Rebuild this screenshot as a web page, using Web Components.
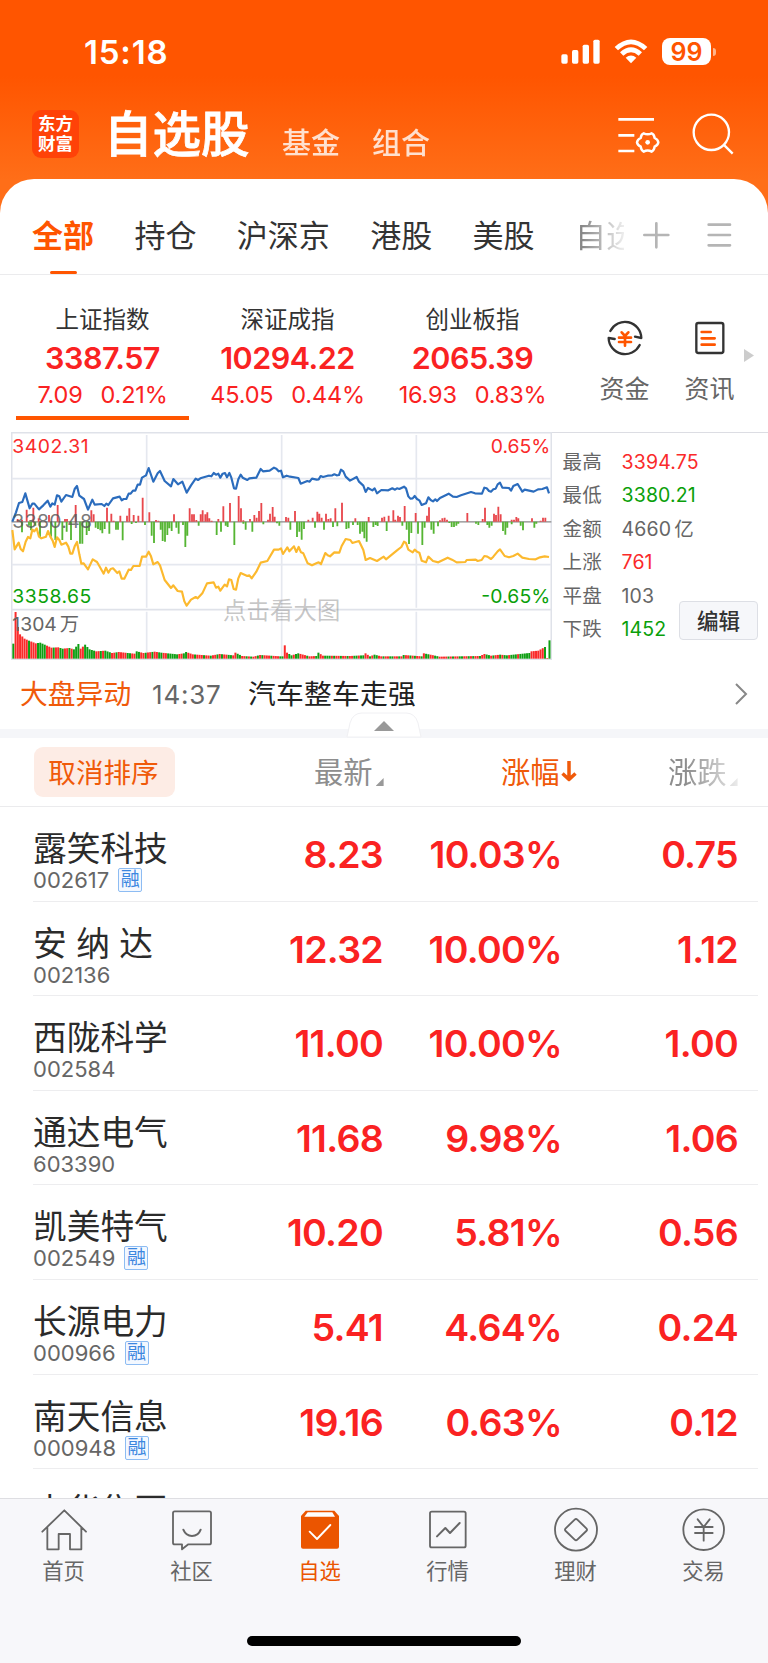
<!DOCTYPE html>
<html lang="zh-CN">
  <head>
    <meta charset="UTF-8" />
    <meta name="viewport" content="width=device-width, initial-scale=1.0" />
    <title>自选股</title>
    <style>
      body {
        margin: 0;
        background: #fff;
        color: #333;
        font-family: Inter, 'Noto Sans CJK SC', sans-serif;
      }
    </style>
  </head>
  <body>
    <stock-app></stock-app>

    <template name="stock-app">
      <style>
        :host {
          display: flex;
          flex-direction: column;
          width: 768px;
          height: 1663px;
          overflow: hidden;
          background: linear-gradient(#ff5500 76px, #ff6e18 180px);
        }
        main {
          flex: 1;
          min-height: 0;
          overflow: hidden;
          background: #fff;
          border-radius: 34px 34px 0 0;
        }
      </style>
      <status-bar></status-bar>
      <app-header></app-header>
      <main>
        <group-tabs></group-tabs>
        <index-strip></index-strip>
        <market-panel></market-panel>
        <news-ticker time="14:37">汽车整车走强</news-ticker>
        <stock-table></stock-table>
      </main>
      <bottom-nav></bottom-nav>
    </template>

    <template name="status-bar">
      <style>
        :host {
          display: flex;
          align-items: center;
          box-sizing: border-box;
          height: 80px;
          padding: 23px 52px 0 84px;
          color: #fff;
        }
        .time {
          flex: 1;
          font-size: 33px;
          font-weight: 600;
          line-height: 40px;
          letter-spacing: 0.8px;
        }
        .battery {
          width: 49px;
          height: 27px;
          line-height: 28px;
          border-radius: 8px;
          background: #fff;
          color: #ff5500;
          font-size: 25px;
          font-weight: 600;
          text-align: center;
        }
        .nub {
          width: 3px;
          height: 8px;
          margin-left: 2px;
          border-radius: 0 3px 3px 0;
          background: #ffb48a;
        }
        svg {
          display: block;
        }
      </style>
      <span class="time">15:18</span>
      <svg width="39" height="25" viewBox="0 0 117 75" fill="#fff">
        <rect x="1" y="46" width="19" height="28" rx="5" />
        <rect x="33" y="33" width="19" height="41" rx="5" />
        <rect x="65" y="17" width="19" height="57" rx="5" />
        <rect x="97" y="2" width="19" height="72" rx="5" />
      </svg>
      <svg width="34" height="25" viewBox="0 0 102 75" fill="#fff" style="margin: 0 14px 0 14px">
        <path d="M2 24Q51 -21 100 24L90 34Q51 -3 12 34Z" />
        <path d="M18 40Q51 10 84 40L74 50Q51 30 28 50Z" />
        <path d="M35 56Q51 43 67 56L51 73Z" />
      </svg>
      <span class="battery">99</span>
      <span class="nub"></span>
    </template>

    <template name="app-header">
      <style>
        :host {
          display: flex;
          height: 99px;
          padding: 0 34px 0 32px;
          box-sizing: border-box;
          color: #fff;
        }
        .logo {
          display: flex;
          flex-direction: column;
          justify-content: center;
          align-items: center;
          width: 47px;
          height: 48px;
          margin-top: 30px;
          border-radius: 9px;
          background: #ff4208;
          font-size: 17.5px;
          font-weight: 700;
          line-height: 20px;
        }
        h1 {
          width: 147px;
          margin: 28px 0 0 25px;
          font-size: 48.5px;
          font-weight: 500;
          line-height: 53px;
          white-space: nowrap;
          -webkit-text-stroke: 0.8px #fff;
        }
        .link {
          margin: 44px 0 0 32px;
          width: 58px;
          font-size: 29px;
          font-weight: 500;
          line-height: 40px;
          opacity: 0.8;
        }
        h1 + .link {
          margin-left: 31px;
        }
        .icons {
          flex: 1;
          display: flex;
          justify-content: flex-end;
          gap: 32px;
          padding-top: 32px;
        }
        svg {
          fill: none;
          stroke: #fff;
        }
      </style>
      <div class="logo"><span>东方</span><span>财富</span></div>
      <h1>自选股</h1>
      <span class="link">基金</span>
      <span class="link">组合</span>
      <div class="icons">
        <svg width="42" height="42" viewBox="0 0 126 126" stroke-width="8">
          <path d="M1 22H108M1 70H49M1 117H49" />
          <path
            d="M77 64Q89 70 101 64Q108 66 110 78Q120 83 121 91Q120 99 110 104Q108 116 101 119Q89 112 77 119Q70 116 68 104Q58 99 57 91Q58 83 68 78Q70 66 77 64Z"
            stroke-width="7.5"
          />
          <circle cx="89" cy="91" r="7" fill="#fff" stroke="none" />
        </svg>
        <svg width="42" height="44" viewBox="0 0 126 132" stroke-width="7">
          <circle cx="58" cy="61" r="53" />
          <path d="M95 98L122 125" />
        </svg>
      </div>
    </template>

    <template name="group-tabs">
      <style>
        :host {
          display: flex;
          height: 96px;
          border-bottom: 1.5px solid #ebebed;
          box-sizing: border-box;
          padding-left: 32px;
          font-size: 31px;
          line-height: 114px;
        }
        span {
          margin-right: 40.4px;
          white-space: nowrap;
        }
        .active {
          display: flex;
          flex-direction: column;
          align-items: center;
          color: #ff5500;
          font-weight: 700;
        }
        .active::after {
          content: '';
          width: 27px;
          height: 4px;
          margin-top: -22px;
          border-radius: 2px;
          background: #ff5500;
        }
        .cut {
          width: 49px;
          margin-right: 19px;
          overflow: hidden;
          color: transparent;
          background: linear-gradient(90deg, #777, #eee) text;
        }
        svg {
          margin-top: 43px;
          fill: none;
          stroke: #b5b5b5;
          stroke-linecap: round;
        }
      </style>
      <span class="active">全部</span>
      <span>持仓</span>
      <span>沪深京</span>
      <span>港股</span>
      <span>美股</span>
      <span class="cut">自选</span>
      <svg width="90" height="28" viewBox="0 0 270 84" stroke-width="8">
        <path d="M4 39H76M40 4V76M197 8H261M197 39H261M197 70H261" />
      </svg>
    </template>

    <template name="index-strip">
      <style>
        :host {
          display: flex;
          height: 157px;
          padding-left: 10px;
        }
        .tool {
          display: flex;
          flex-direction: column;
          align-items: center;
          width: 85px;
          padding-top: 45px;
          color: #666;
          font-size: 25px;
          line-height: 30px;
        }
        .tool svg {
          margin-bottom: 18px;
        }
        svg {
          fill: none;
          stroke: #333;
        }
        .more {
          width: 10px;
          height: 13px;
          margin: 74px 0 0 -8px;
          background: #ccc;
          clip-path: polygon(0 0, 100% 50%, 0 100%);
        }
      </style>
      <index-quote name="上证指数" price="3387.57" diff="7.09" rate="0.21%" active></index-quote>
      <index-quote name="深证成指" price="10294.22" diff="45.05" rate="0.44%"></index-quote>
      <index-quote name="创业板指" price="2065.39" diff="16.93" rate="0.83%"></index-quote>
      <div class="tool" style="margin-left: 17px">
        <svg width="36" height="36" viewBox="0 0 108 108" stroke-width="7" stroke-linecap="round" stroke-linejoin="round">
          <path d="M10 33A49 49 0 0 1 103 54L84 50" />
          <path d="M98 75A49 49 0 0 1 5 54L23 57" />
          <path d="M44 37L54 48L64 37M36 53H72M36 66H72M54 49V77" stroke="#ff5500" stroke-width="8" />
        </svg>
        资金
      </div>
      <div class="tool">
        <svg width="36" height="36" viewBox="0 0 108 108" stroke-width="7" stroke-linecap="round">
          <rect x="13" y="9" width="81" height="90" rx="6" />
          <path d="M29 36H56M29 55H68M29 74H68" stroke="#ff5500" stroke-width="8" />
        </svg>
        资讯
      </div>
      <div class="more"></div>
    </template>

    <template name="index-quote">
      <style>
        :host {
          display: flex;
          flex-direction: column;
          align-items: center;
          width: 185px;
          height: 147px;
          text-align: center;
          color: #fa2222;
        }
        .name {
          margin-top: 27px;
          font-size: 23.5px;
          line-height: 36px;
          color: #333;
        }
        .price {
          font-size: 30.5px;
          font-weight: 600;
          line-height: 39px;
          letter-spacing: -0.5px;
        }
        .change {
          display: flex;
          gap: 18px;
          font-size: 23.5px;
          line-height: 36px;
          letter-spacing: -0.2px;
        }
        :host([active])::after {
          content: '';
          width: 173px;
          height: 4px;
          margin-top: 3px;
          background: #ff5500;
        }
      </style>
      <div class="name"></div>
      <div class="price"></div>
      <div class="change"><span class="diff"></span><span class="rate"></span></div>
    </template>

    <template name="market-panel">
      <style>
        :host {
          display: flex;
          position: relative;
          height: 228px;
          padding-left: 11px;
        }
        .stats {
          flex: 1;
          display: grid;
          grid-template-columns: 59px 1fr;
          grid-auto-rows: 33.45px;
          align-content: start;
          padding: 13px 0 0 10.5px;
          border-top: 1.5px solid #dcdde3;
          font-size: 19.5px;
          line-height: 33.45px;
          letter-spacing: 0.15px;
          color: #666;
        }
        .up {
          color: #fa2a2a;
        }
        .down {
          color: #0a9f0a;
        }
        .unit {
          margin-left: 3px;
        }
        /* floats over the last rows of the stats */
        button {
          position: absolute;
          left: 679px;
          top: 169px;
          width: 79px;
          height: 39px;
          padding: 0;
          border: 1.5px solid #dddfe5;
          border-radius: 4px;
          background: #f6f7fa;
          font: 500 21.5px/36px Inter, 'Noto Sans CJK SC', sans-serif;
          color: #333;
        }
      </style>
      <index-chart></index-chart>
      <div class="stats">
        <span>最高</span><span class="up">3394.75</span>
        <span>最低</span><span class="down">3380.21</span>
        <span>金额</span><span>4660<span class="unit">亿</span></span>
        <span>上涨</span><span class="up">761</span>
        <span>平盘</span><span>103</span>
        <span>下跌</span><span class="down">1452</span>
      </div>
      <button>编辑</button>
    </template>

    <template name="index-chart">
      <style>
        :host {
          display: block;
          width: 541px;
          height: 228px;
        }
        svg {
          display: block;
        }
        text {
          font-size: 58px;
        }
        .line {
          fill: none;
          stroke-width: 6.5;
          stroke-linejoin: round;
        }
      </style>
      <svg width="541" height="228" viewBox="33 21 1623 684">
        <g fill="none" stroke="#dfe2e9" stroke-width="5">
          <path d="M33 23H1656M33 554H1656M33 703H1656M35 23V703M1654 23V703" />
          <path d="M35 161H1654M35 419H1654M440 30V548M440 560V703M845 30V548M845 560V703M1249 30V548M1249 560V703" stroke="#e5e8ef" />
        </g>
        <path d="M35 290.5H1654" stroke="#888" stroke-width="4" />
        <g class="minute"></g>
        <g class="volume"></g>
        <polyline class="line avg" stroke="#fcb92e" />
        <polyline class="line cur" stroke="#2b6cbd" />
        <text x="37" y="84" fill="#fa2a2a" textLength="229">3402.31</text>
        <text x="37" y="308" fill="#555" fill-opacity=".8" textLength="239">3380.48</text>
        <text x="37" y="533" fill="#0a9f0a" textLength="237">3358.65</text>
        <text x="1651" y="84" fill="#fa2a2a" text-anchor="end" textLength="179">0.65%</text>
        <text x="1651" y="533" fill="#0a9f0a" text-anchor="end" textLength="207">-0.65%</text>
        <text x="37" y="617" fill="#666">1304<tspan dx="9">万</tspan></text>
        <text x="669" y="583" fill="#777" fill-opacity=".42" style="font-size: 70px" textLength="352">点击看大图</text>
      </svg>
    </template>

    <template name="news-ticker">
      <style>
        :host {
          display: block;
          position: relative;
          height: 69px;
          border-bottom: 9px solid #f5f6f9;
        }
        .row {
          display: flex;
          padding: 0 20px 0 20px;
          line-height: 69px;
          font-size: 27.8px;
        }
        .tag {
          width: 132px;
          color: #f05a0a;
        }
        .time {
          width: 96px;
          font-size: 26px;
          color: #666;
          letter-spacing: 0.8px;
        }
        .text {
          flex: 1;
          color: #222;
          letter-spacing: 0.2px;
        }
        .chevron {
          margin-top: 22px;
        }
        /* pull-up handle sitting over the divider */
        .handle {
          position: absolute;
          left: 345px;
          top: 52px;
        }
      </style>
      <div class="row">
        <span class="tag">大盘异动</span>
        <span class="time"></span>
        <span class="text"><slot></slot></span>
        <svg class="chevron" width="14" height="24" viewBox="0 0 14 24" fill="none" stroke="#888" stroke-width="2">
          <path d="M2 2L12 12L2 22" />
        </svg>
      </div>
      <svg class="handle" width="78" height="27" viewBox="0 0 78 27">
        <path d="M2 25L5 11Q8 1 17 1H61Q70 1 73 11L76 25Z" fill="#fff" stroke="#f0f0f3" />
        <path d="M29 19L39 9L49 19Z" fill="#999" />
      </svg>
    </template>

    <template name="stock-table">
      <style>
        :host {
          display: block;
        }
        .head {
          display: grid;
          grid-template-columns: 280px 187px 167px 100px;
          align-items: center;
          height: 68px;
          padding-left: 34px;
          border-bottom: 1.5px solid #ebebed;
          font-size: 29.3px;
          color: #8e8e8e;
          line-height: 52px;
        }
        .reset {
          justify-self: start;
          box-sizing: border-box;
          width: 141px;
          height: 50px;
          padding-right: 2px;
          border-radius: 9px;
          background: #fdece5;
          color: #f05a0a;
          font-size: 27.6px;
          text-align: center;
        }
        .col {
          display: flex;
          padding-top: 2px;
        }
        .sorted {
          color: #f05a0a;
        }
        .corner {
          width: 8px;
          height: 8px;
          margin: 31px 0 0 3px;
          background: #999;
          clip-path: polygon(100% 0, 100% 100%, 0 100%);
        }
        .arrow {
          margin: 12px 0 0 1px;
        }
        .fade {
          mask-image: linear-gradient(90deg, #000 18px, #0003 70px);
        }
      </style>
      <div class="head">
        <span class="reset">取消排序</span>
        <span class="col">最新<i class="corner"></i></span>
        <span class="col sorted">
          涨幅
          <svg class="arrow" width="16" height="24" viewBox="0 0 16 24" fill="none" stroke="#f05a0a" stroke-width="3.500">
            <path d="M8 2V21M1.500 14.500L8 20.500L14.500 14.500" stroke-linejoin="round" />
          </svg>
        </span>
        <span class="col fade">涨跌<i class="corner"></i></span>
      </div>
      <div class="body"></div>
    </template>

    <template name="stock-row">
      <style>
        :host {
          display: grid;
          grid-template-columns: 180px 170px 179px 176px;
          box-sizing: border-box;
          height: 94.6px;
          margin: 0 10px 0 33px;
          border-bottom: 1.5px solid #ededef;
        }
        .name {
          padding-top: 22px;
          font-size: 33.7px;
          line-height: 39px;
          white-space: nowrap;
          color: #2b2b2b;
        }
        .meta {
          display: flex;
          align-items: center;
          gap: 9px;
          height: 24px;
          line-height: 24px;
          font-size: 22px;
          color: #666;
        }
        .badge {
          box-sizing: border-box;
          width: 24px;
          height: 24px;
          border: 1.5px solid #8dbcf3;
          border-radius: 2px;
          background: #f3f8ff;
          color: #3c87df;
          font-size: 19px;
          line-height: 22px;
          text-align: center;
        }
        :host(:not([margin])) .badge {
          display: none;
        }
        .num {
          color: #fa2222;
          font-size: 37.5px;
          font-weight: 600;
          line-height: 95px;
          text-align: right;
          letter-spacing: -0.7px;
        }
      </style>
      <div>
        <div class="name"><slot></slot></div>
        <div class="meta"><span class="code"></span><span class="badge">融</span></div>
      </div>
      <div class="num price"></div>
      <div class="num rate"></div>
      <div class="num diff"></div>
    </template>

    <template name="bottom-nav">
      <style>
        :host {
          display: flex;
          flex-direction: column;
          align-items: center;
          height: 164px;
          border-top: 1.5px solid #dedee2;
          background: #f7f7fa;
        }
        nav {
          display: flex;
          height: 137px;
        }
        .bar {
          width: 274px;
          height: 10px;
          border-radius: 5px;
          background: #000;
        }
        svg {
          display: block;
        }
      </style>
      <nav>
        <nav-item label="首页">
          <svg width="48" height="48" viewBox="0 0 144 144">
            <path d="M7 77L73 13L138 77M22 64V130H56V84H90V130H124V64" />
          </svg>
        </nav-item>
        <nav-item label="社区">
          <svg width="48" height="48" viewBox="0 0 144 144">
            <path d="M20 16H124Q129 16 129 21V110Q129 115 124 115H61L42 130V115H20Q15 115 15 110V21Q15 16 20 16Z" />
            <path d="M46 71Q54 90 72 90Q91 90 98 71" stroke-width="6" />
          </svg>
        </nav-item>
        <nav-item label="自选" active>
          <svg width="48" height="48" viewBox="0 0 144 144">
            <path d="M29 14H115L129 30V122Q129 128 123 128H21Q15 128 15 122V30Z" fill="currentColor" stroke="none" />
            <path d="M35 19H109L117 32H25Z" fill="#fff" stroke="none" />
            <path d="M41 77L63 99L103 57" stroke="#fff" />
          </svg>
        </nav-item>
        <nav-item label="行情">
          <svg width="48" height="48" viewBox="0 0 144 144">
            <rect x="18" y="17" width="107" height="107" rx="5" />
            <path d="M39 91L64 66L78 81L107 51" stroke-width="6" />
          </svg>
        </nav-item>
        <nav-item label="理财">
          <svg width="48" height="48" viewBox="0 0 144 144">
            <circle cx="72" cy="71" r="63" />
            <path d="M68 41Q72 37 76 41L103 67Q107 71 103 75L76 101Q72 105 68 101L41 75Q37 71 41 67Z" />
          </svg>
        </nav-item>
        <nav-item label="交易">
          <svg width="48" height="48" viewBox="0 0 144 144">
            <circle cx="71" cy="71" r="61" />
            <path d="M53 40L71 63L89 40M45 63H98M45 81H98M71 63V104" />
          </svg>
        </nav-item>
      </nav>
      <div class="bar"></div>
    </template>

    <template name="nav-item">
      <style>
        :host {
          display: flex;
          flex-direction: column;
          align-items: center;
          width: 128px;
          padding-top: 7px;
          box-sizing: border-box;
          color: #666;
          font-size: 21.3px;
          line-height: 30px;
        }
        :host([active]) {
          color: #eb5500;
        }
        ::slotted(svg) {
          fill: none;
          stroke: currentColor;
          stroke-width: 5.5px;
          stroke-linejoin: round;
          stroke-linecap: round;
        }
        .label {
          margin: 2px 1px 0 0;
        }
      </style>
      <slot></slot>
      <span class="label"></span>
    </template>

    <script>
      class BaseElement extends HTMLElement {
        constructor() {
          super()
          let shadowRoot = this.attachShadow({ mode: 'open' })
          let template = document.querySelector(
            `template[name="${this.localName}"]`,
          )
          shadowRoot.appendChild(template.content.cloneNode(true))
        }
        // copy attributes into the shadow elements with the same class name
        fill(...names) {
          for (let name of names) {
            this.shadowRoot.querySelector('.' + name).textContent =
              this.getAttribute(name)
          }
        }
      }

      class IndexQuote extends BaseElement {
        connectedCallback() {
          this.fill('name', 'price', 'diff', 'rate')
        }
      }

      class NewsTicker extends BaseElement {
        connectedCallback() {
          this.fill('time')
        }
      }

      class NavItem extends BaseElement {
        connectedCallback() {
          this.fill('label')
        }
      }

      class StockRow extends BaseElement {
        connectedCallback() {
          this.fill('code', 'price', 'rate', 'diff')
        }
      }

      let stocks = [
        ['露笑科技', '002617', '8.23', '10.03%', '0.75', true],
        ['安 纳 达', '002136', '12.32', '10.00%', '1.12', false],
        ['西陇科学', '002584', '11.00', '10.00%', '1.00', false],
        ['通达电气', '603390', '11.68', '9.98%', '1.06', false],
        ['凯美特气', '002549', '10.20', '5.81%', '0.56', true],
        ['长源电力', '000966', '5.41', '4.64%', '0.24', true],
        ['南天信息', '000948', '19.16', '0.63%', '0.12', true],
        ['吉华集团', '', '', '', '', false],
      ]

      class StockTable extends BaseElement {
        connectedCallback() {
          let body = this.shadowRoot.querySelector('.body')
          for (let [name, code, price, rate, diff, margin] of stocks) {
            let row = document.createElement('stock-row')
            row.textContent = name
            row.setAttribute('code', code)
            row.setAttribute('price', price)
            row.setAttribute('rate', rate)
            row.setAttribute('diff', diff)
            row.toggleAttribute('margin', margin)
            body.appendChild(row)
          }
        }
      }

      let cur =
        '37,290 48,262 57,234 67,231 76,205 89,250 97,236 103,236 117,253 130,241 143,227 151,245 157,235 164,239 171,211 178,214 184,230 198,210 217,216 224,192 231,183 238,212 252,222 264,254 277,224 284,239 305,237 313,243 319,236 325,240 339,220 359,215 365,226 371,222 379,222 386,206 392,206 399,197 406,197 413,179 420,179 426,158 438,151 446,129 460,170 473,145 480,138 494,168 513,184 520,162 534,178 547,170 560,203 573,181 587,161 594,165 601,160 627,152 634,154 641,144 648,149 655,146 661,158 668,146 675,144 681,157 688,144 694,158 702,190 708,191 715,163 722,149 728,158 742,165 748,160 769,158 782,132 789,139 809,137 822,128 829,131 836,139 843,137 849,157 860,152 870,155 895,159 902,176 922,168 929,170 936,161 950,164 956,163 962,153 969,156 983,152 997,151 1003,148 1010,151 1017,150 1023,134 1030,139 1037,155 1050,167 1070,156 1077,170 1090,182 1097,201 1104,189 1117,196 1124,190 1131,205 1144,195 1165,196 1177,190 1185,194 1191,190 1198,192 1212,185 1218,190 1225,214 1231,221 1238,220 1244,213 1251,222 1258,226 1265,240 1278,235 1285,217 1292,225 1299,229 1306,223 1311,228 1320,219 1346,206 1359,215 1370,216 1383,211 1413,201 1425,205 1446,206 1453,188 1460,190 1467,198 1473,200 1480,193 1487,191 1493,178 1500,173 1507,188 1527,189 1533,197 1540,183 1553,177 1567,200 1574,194 1601,200 1614,193 1627,192 1641,187 1647,205'
      let avg =
        '37,315 44,373 56,353 62,372 69,379 77,350 84,336 91,340 97,314 103,319 110,310 117,335 124,340 138,335 144,318 151,335 158,347 164,366 171,337 178,345 184,359 198,353 205,365 211,386 217,386 224,364 231,351 238,388 244,416 251,415 264,433 278,403 291,411 298,423 311,446 318,428 325,443 332,432 339,430 352,444 358,439 365,461 373,461 386,434 393,435 400,423 419,423 426,395 438,395 446,380 453,394 460,418 473,411 480,421 494,465 513,489 520,481 533,498 546,500 553,529 560,542 573,524 587,516 593,520 607,505 621,475 641,472 648,488 655,485 661,497 674,479 681,484 687,463 694,465 701,492 708,494 715,460 722,444 742,453 748,451 755,460 769,440 782,413 802,408 822,374 836,374 843,370 849,387 862,367 868,379 875,371 882,364 889,381 896,366 903,382 910,385 923,415 936,421 949,415 956,412 963,417 976,384 983,391 990,394 1003,382 1018,383 1025,363 1037,342 1051,345 1057,354 1077,348 1090,375 1097,405 1110,399 1131,408 1151,395 1158,403 1191,376 1204,366 1212,350 1218,354 1225,374 1238,382 1244,374 1251,380 1258,383 1265,407 1278,412 1285,395 1299,408 1315,412 1343,398 1356,404 1370,412 1396,411 1400,405 1427,404 1433,408 1445,405 1453,393 1462,395 1473,402 1480,395 1493,379 1500,373 1514,393 1527,397 1540,393 1553,386 1567,398 1587,402 1607,403 1620,397 1634,394 1647,396'

      // minute bars as x,y pairs, measured from the zero line
      let ups =
        '53,282 66,284 80,254 100,248 116,280 147,270 173,240 195,282 201,282 227,240 274,256 281,268 321,248 334,266 341,287 361,272 381,272 388,250 401,270 415,272 428,218 448,262 468,285 475,287 522,268 569,250 576,268 582,268 589,285 602,268 608,256 616,268 622,262 628,280 635,287 655,282 670,244 690,234 716,213 723,250 730,286 750,282 763,270 770,278 777,258 784,234 804,284 810,266 818,246 824,275 858,276 865,278 885,258 925,284 938,278 952,260 958,266 965,278 978,266 985,282 992,280 1006,250 1026,233 1066,280 1106,276 1146,278 1153,275 1166,272 1180,256 1186,284 1194,272 1200,276 1214,243 1247,264 1281,272 1287,247 1320,286 1327,280 1334,278 1341,284 1402,264 1448,282 1455,248 1482,266 1488,270 1495,245 1502,268 1535,284 1542,284 1549,276 1555,280 1596,280 1622,287 1629,278 1636,278'
      let downs =
        '66,322 87,302 93,316 106,302 120,336 153,335 166,345 187,345 200,320 213,345 240,356 247,356 260,330 267,318 287,308 294,312 301,316 307,325 314,312 328,326 348,314 354,314 368,346 395,297 408,294 435,300 455,332 462,354 482,314 488,348 495,350 502,330 508,310 515,318 529,308 536,326 549,300 556,366 562,332 596,302 650,330 663,320 677,302 683,306 703,360 730,296 737,314 757,320 790,298 831,295 838,302 871,314 891,336 898,320 905,344 912,312 945,308 972,314 999,306 1012,304 1039,312 1046,310 1059,300 1073,300 1080,326 1087,320 1093,340 1100,350 1120,306 1127,300 1133,303 1160,318 1207,302 1220,314 1227,357 1234,324 1254,326 1267,360 1274,308 1294,314 1301,326 1314,304 1348,294 1355,306 1362,306 1369,302 1375,296 1428,296 1435,300 1462,300 1468,308 1475,302 1509,318 1516,329 1522,308 1535,298 1562,302 1569,316 1603,308 1609,296'

      // volume envelope: bar number, height
      let envelope =
        '0,45 1,140 2,95 3,73 5,60 7,54 10,46 12,48 17,33 20,34 22,30 25,32 27,28 29,44 30,30 32,42 34,28 37,22 41,24 44,17 47,20 51,17 54,15 55,22 58,17 63,21 66,18 73,13 76,16 77,20 80,13 88,9 92,14 98,10 99,18 102,8 107,6 110,11 119,7 120,7 121,40 122,18 124,10 127,16 132,7 135,8 136,18 138,9 150,8 156,10 157,16 159,7 161,12 164,7 173,7 174,11 182,7 183,16 188,9 190,6 208,8 210,14 213,9 217,12 220,10 230,17 231,22 234,24 237,35 238,2 239,55'
      let colors =
        'grrrrrrgrrrggggrrrgrrggrrgrgggrrgggggrrgrgggrrgrrrrggrrggrrgrrgrrggrrgggggrrggrrrgrrrgrrgrrgrgrrggrrggrrgrgrrgrgrrrgrrrggrrggrggrrrgrrrggrrgggrgrrgrrgrrggrggrrgrggrrgrrggrrgrgrrgrgrrgrggrrggrrrrgrgrrggrrgrgrrgrrggrgrrgrggrgggrgggggrrrrrrg'

      class IndexChart extends BaseElement {
        connectedCallback() {
          let $ = selector => this.shadowRoot.querySelector(selector)
          $('.cur').setAttribute('points', cur)
          $('.avg').setAttribute('points', avg)
          $('.minute').innerHTML =
            this.bars(ups, '#e8474c') + this.bars(downs, '#55b533')
          $('.volume').innerHTML = this.volume()
        }
        parse(text) {
          return text.split(' ').map(pair => pair.split(',').map(Number))
        }
        bars(text, color) {
          let d = this.parse(text)
            .map(([x, y]) => `M${x} 290V${y}`)
            .join('')
          return `<path d="${d}" stroke="${color}" stroke-width="5.5" />`
        }
        volume() {
          let points = this.parse(envelope)
          let html = ''
          let at = 0
          for (let i = 0; i < 240; i++) {
            while (at < points.length - 2 && points[at + 1][0] <= i) at++
            let [x0, h0] = points[at]
            let [x1, h1] = points[at + 1]
            let h = h0 + ((h1 - h0) * (i - x0)) / (x1 - x0)
            let green = colors[i] == 'g' || i == 239
            let color = green ? '#0f9f14' : '#fa2a2a'
            let x = 37 + i * 6.73
            html += `<rect x="${x}" y="${701 - h}" width="6" height="${h}" fill="${color}" />`
          }
          return html
        }
      }

      customElements.define('index-quote', IndexQuote)
      customElements.define('news-ticker', NewsTicker)
      customElements.define('nav-item', NavItem)
      customElements.define('stock-row', StockRow)
      customElements.define('stock-table', StockTable)
      customElements.define('index-chart', IndexChart)
      customElements.define('status-bar', class extends BaseElement {})
      customElements.define('app-header', class extends BaseElement {})
      customElements.define('group-tabs', class extends BaseElement {})
      customElements.define('index-strip', class extends BaseElement {})
      customElements.define('market-panel', class extends BaseElement {})
      customElements.define('bottom-nav', class extends BaseElement {})
      customElements.define('stock-app', class extends BaseElement {})
    </script>
  </body>
</html>
